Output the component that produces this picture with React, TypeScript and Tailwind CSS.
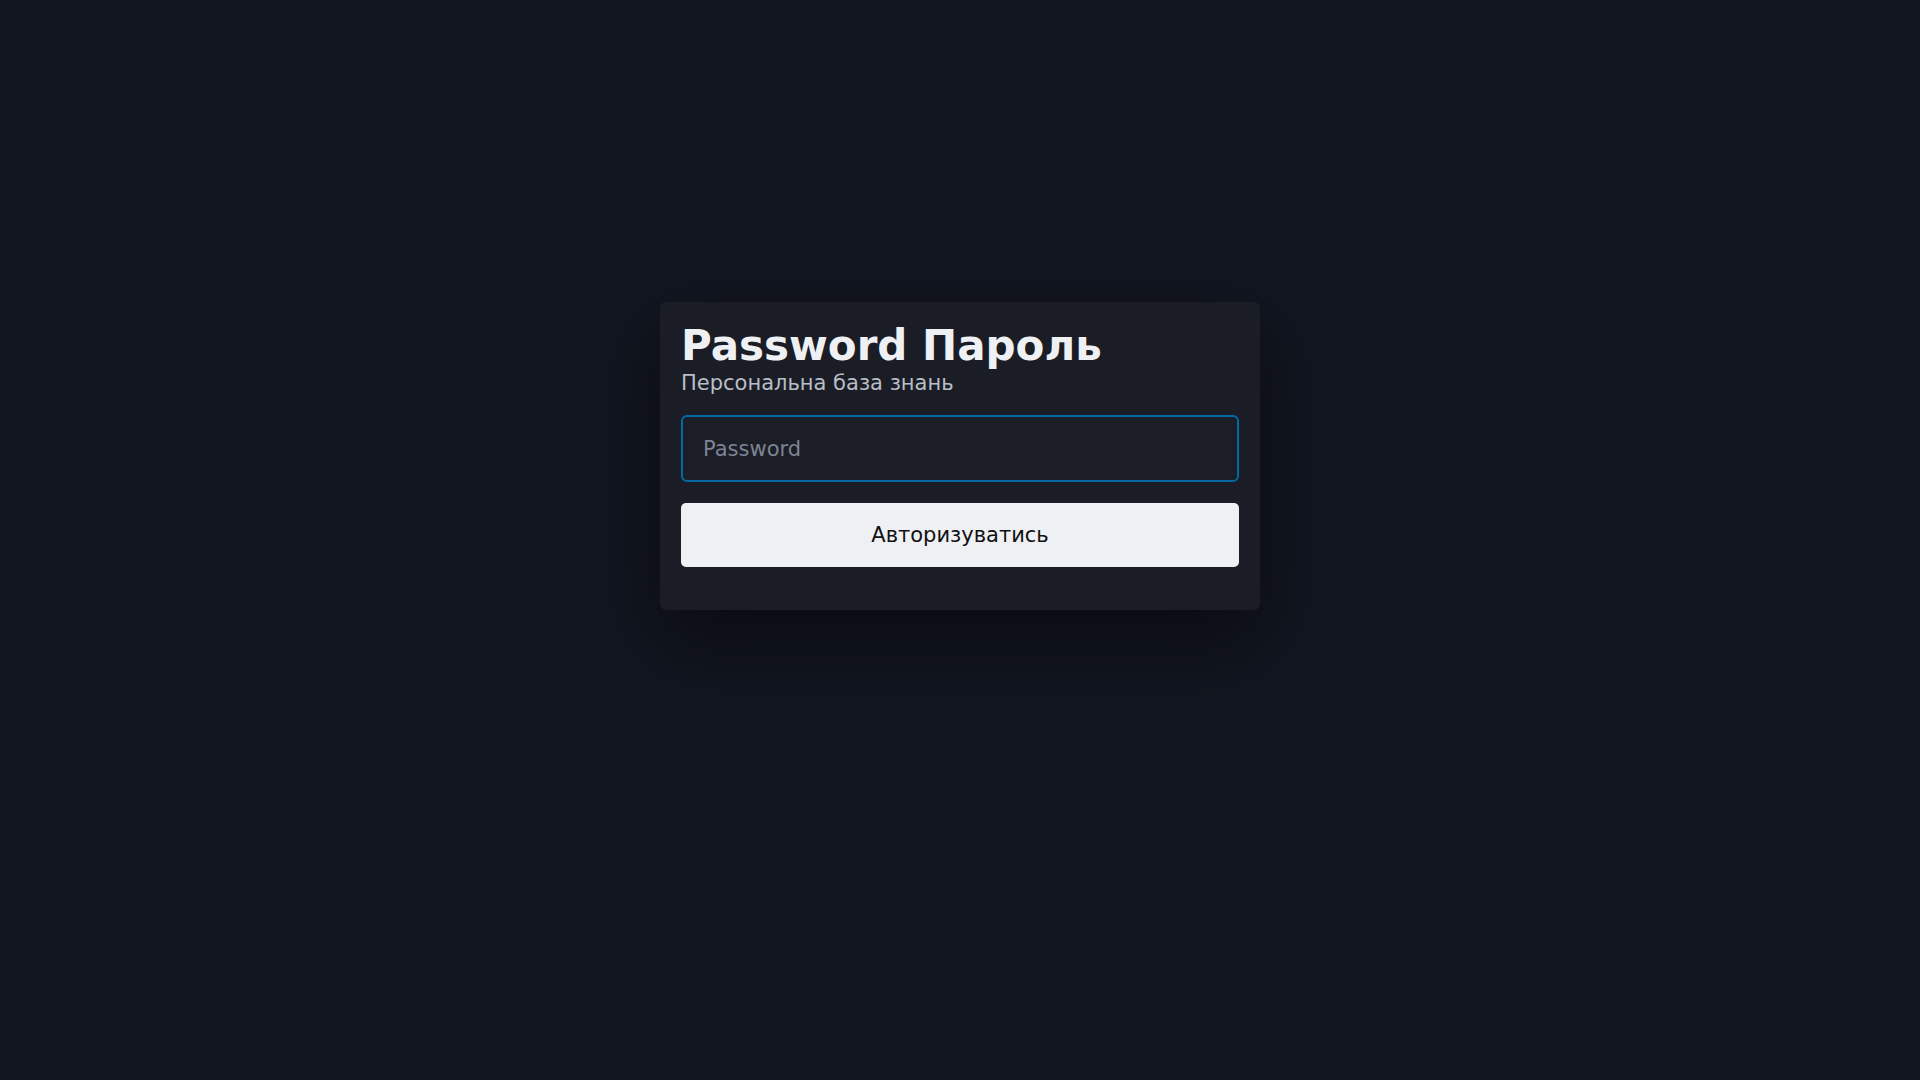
export default function App() {
  return (
    <div
      className="min-h-screen w-full bg-[#121620] flex justify-center pt-[302px]"
      style={{ fontFamily: '"DejaVu Sans", "Noto Sans", sans-serif' }}
    >
      <div className="w-[600px] h-[308px] rounded-md bg-[#1a1d25] px-[21px] pt-5 shadow-[0_30px_80px_rgba(0,0,0,0.5)]">
        <h1 className="text-[42px] font-bold leading-[1.164] text-[#eff0f3]">Password Пароль</h1>
        <p className="text-[21px] leading-[1.164] text-[#b9bdc6]">Персональна база знань</p>
        <input
          type="password"
          placeholder="Password"
          className="mt-5 block w-full h-[67px] rounded-md border-2 border-[#0469a6] bg-[#1b1e26] px-5 text-[21px] text-[#eff0f3] placeholder:text-[#7d8494] outline-none"
        />
        <button className="mt-[21px] block w-full h-[64px] rounded-[5px] bg-[#eff0f3] text-[21px] text-[#111111]">
          Авторизуватись
        </button>
      </div>
    </div>
  )
}
